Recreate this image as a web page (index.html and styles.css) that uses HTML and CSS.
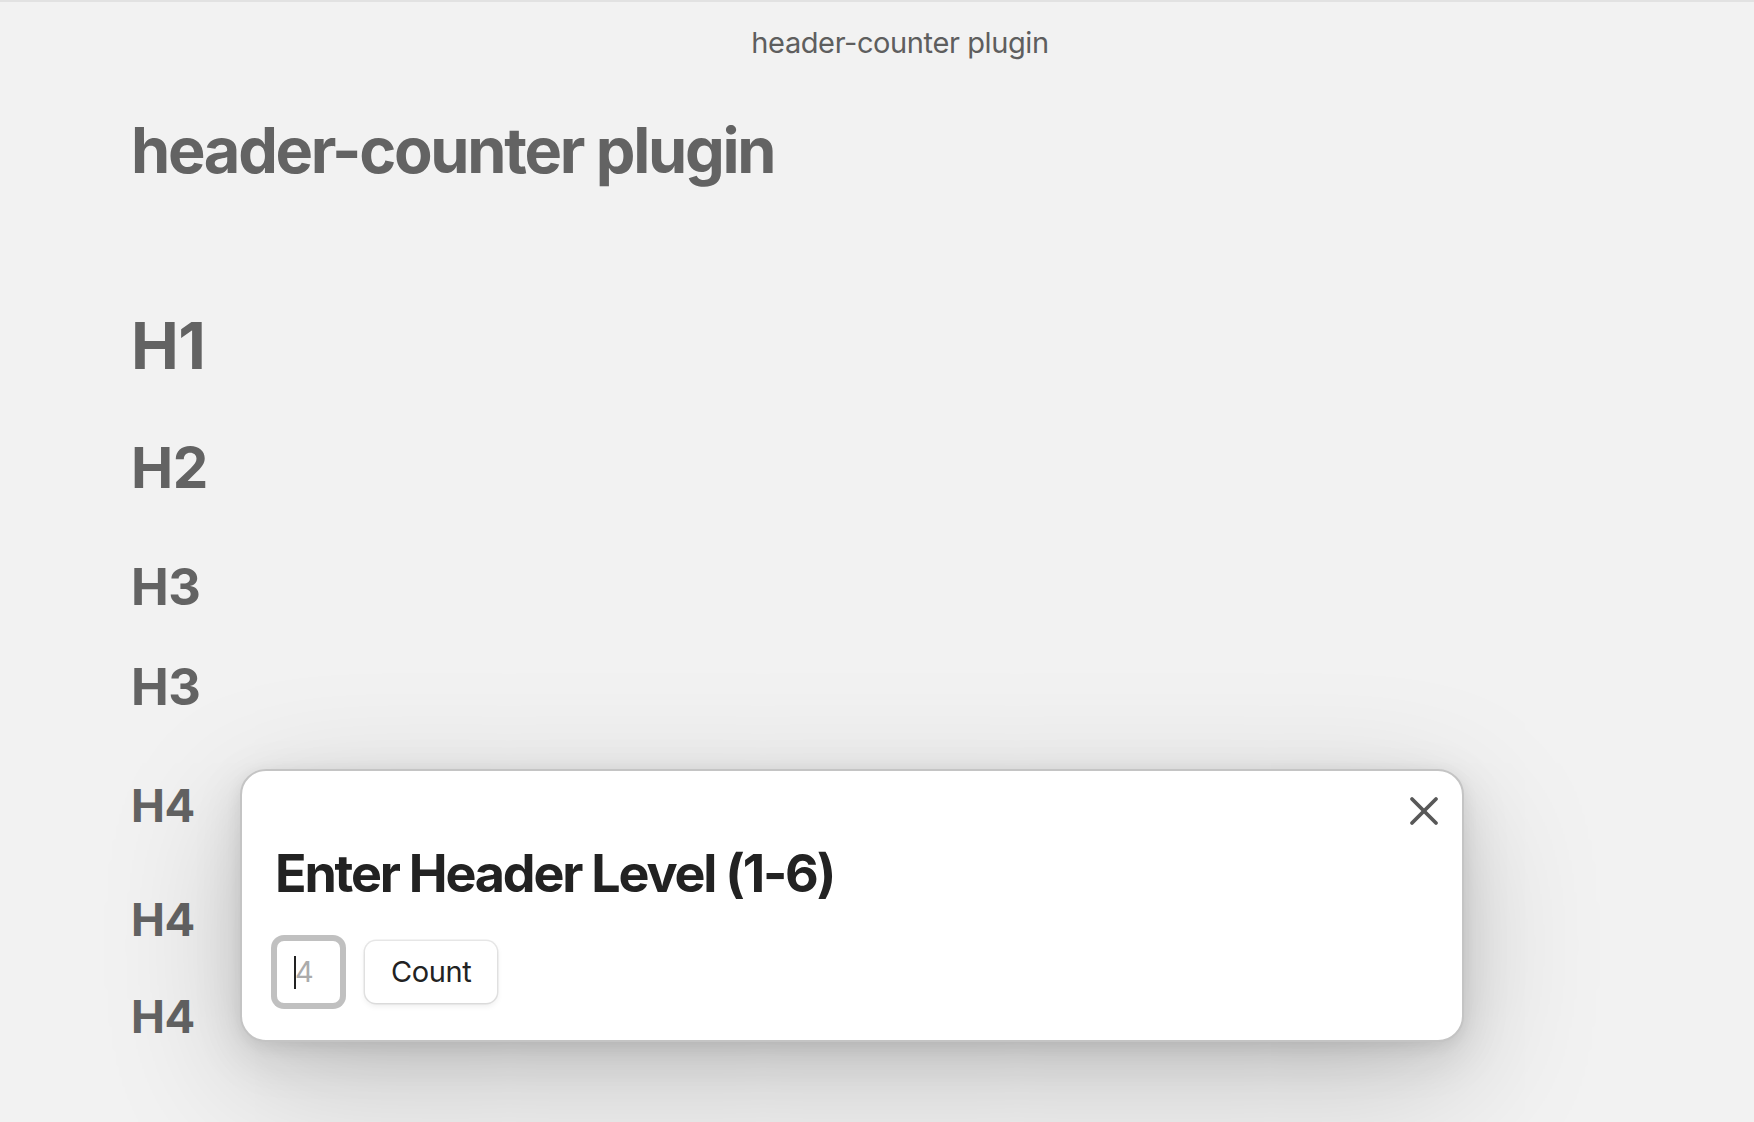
FILE: index.html
```html
<!DOCTYPE html>
<html lang="en">
<head>
<meta charset="utf-8">
<title>header-counter plugin</title>
<link rel="stylesheet" href="styles.css">
</head>
<body>
<div class="app">
  <header class="view-header"><span class="view-title">header-counter plugin</span></header>
  <main class="note">
    <div class="inline-title">header-counter plugin</div>
    <h1 class="hd h1">H1</h1>
    <h2 class="hd h2">H2</h2>
    <h3 class="hd h3 h3-first">H3</h3>
    <h3 class="hd h3 h3-second">H3</h3>
    <h4 class="hd h4 h4-first">H4</h4>
    <h4 class="hd h4 h4-second">H4</h4>
    <h4 class="hd h4 h4-third">H4</h4>
  </main>
  <div class="modal">
    <button class="modal-close" aria-label="Close">
      <svg viewBox="0 0 24 24" width="48" height="48" fill="none" stroke="currentColor" stroke-width="1.9" stroke-linecap="round" stroke-linejoin="round"><path d="M18 6 6 18"/><path d="m6 6 12 12"/></svg>
    </button>
    <h2 class="modal-title">Enter Header Level (1-6)</h2>
    <div class="modal-row">
      <div class="field">
        <input class="level-input" type="text" placeholder="4">
        <span class="caret"></span>
      </div>
      <button class="btn">Count</button>
    </div>
  </div>
</div>
</body>
</html>
```
FILE: styles.css
```css
* { box-sizing: border-box; }
html, body { margin: 0; height: 100%; }
body {
  background: #f2f2f2;
  font-family: Inter, "Noto Sans", sans-serif;
  overflow: hidden;
}
.app {
  position: relative;
  height: 1122px;
  border-top: 2px solid #e2e2e2;
}
.view-header {
  display: flex;
  justify-content: center;
  height: 61px;
  padding: 21px 0 0 46px;
}
.view-title {
  font-size: 29px;
  line-height: 40px;
  letter-spacing: -0.4px;
  color: #5e5e5e;
}
.note { padding-left: 131px; }
.inline-title {
  margin-top: 49.4px;
  font-size: 63px;
  line-height: 76px;
  font-weight: 700;
  letter-spacing: -0.036em;
  color: #636363;
}
.hd {
  margin: 0;
  color: #636363;
  font-weight: 700;
  letter-spacing: -0.01em;
}
.h1 { margin-top: 118.8px; font-size: 64px; line-height: 77px; }
.h2 { margin-top: 50.3px; font-size: 56.5px; line-height: 68px; }
.h3 { font-size: 50.5px; line-height: 61px; }
.h3-first { margin-top: 53.6px; }
.h3-second { margin-top: 39px; }
.h4 { font-size: 45.4px; line-height: 55px; }
.h4-first { margin-top: 60.8px; }
.h4-second { margin-top: 59px; }
.h4-third { margin-top: 42px; }

.modal {
  position: absolute;
  left: 240px;
  top: 767px;
  width: 1224px;
  height: 273px;
  background: #ffffff;
  border: 2px solid #c4c4c4;
  border-radius: 26px;
  padding: 71.8px 32px 0 33px;
  box-shadow: 0 4px 16px rgba(0,0,0,0.07), 0 14px 50px rgba(0,0,0,0.11), 0 40px 140px rgba(0,0,0,0.18);
}
.modal-close {
  position: absolute;
  top: 16px;
  right: 14px;
  width: 48px;
  height: 48px;
  padding: 0;
  border: none;
  background: transparent;
  color: #585858;
  display: flex;
}
.modal-title {
  margin: 0;
  font-size: 52px;
  line-height: 62px;
  font-weight: 700;
  letter-spacing: -0.042em;
  color: #222222;
}
.modal-row {
  display: flex;
  align-items: center;
  gap: 23px;
  margin-top: 34.2px;
}
.field {
  position: relative;
  display: flex;
}
.level-input {
  width: 67px;
  height: 66px;
  border: 2px solid #c0c0c0;
  box-shadow: 0 0 0 4px #c0c0c0;
  border-radius: 9px;
  padding: 0 0 0 18px;
  font-family: Inter, "Noto Sans", sans-serif;
  font-size: 29px;
  color: #222;
  background: #fff;
  outline: none;
}
.level-input::placeholder { color: #ababab; }
.caret {
  position: absolute;
  left: 19px;
  top: 17px;
  width: 2px;
  height: 33px;
  background: #222;
}
.btn {
  height: 62px;
  padding: 0 26px;
  border: none;
  border-radius: 11px;
  background: #fff;
  font-family: Inter, "Noto Sans", sans-serif;
  font-size: 29px;
  letter-spacing: -0.4px;
  color: #222;
  box-shadow: 0 0 0 1.5px rgba(0,0,0,0.09), 0 3px 6px rgba(0,0,0,0.08);
}
```
